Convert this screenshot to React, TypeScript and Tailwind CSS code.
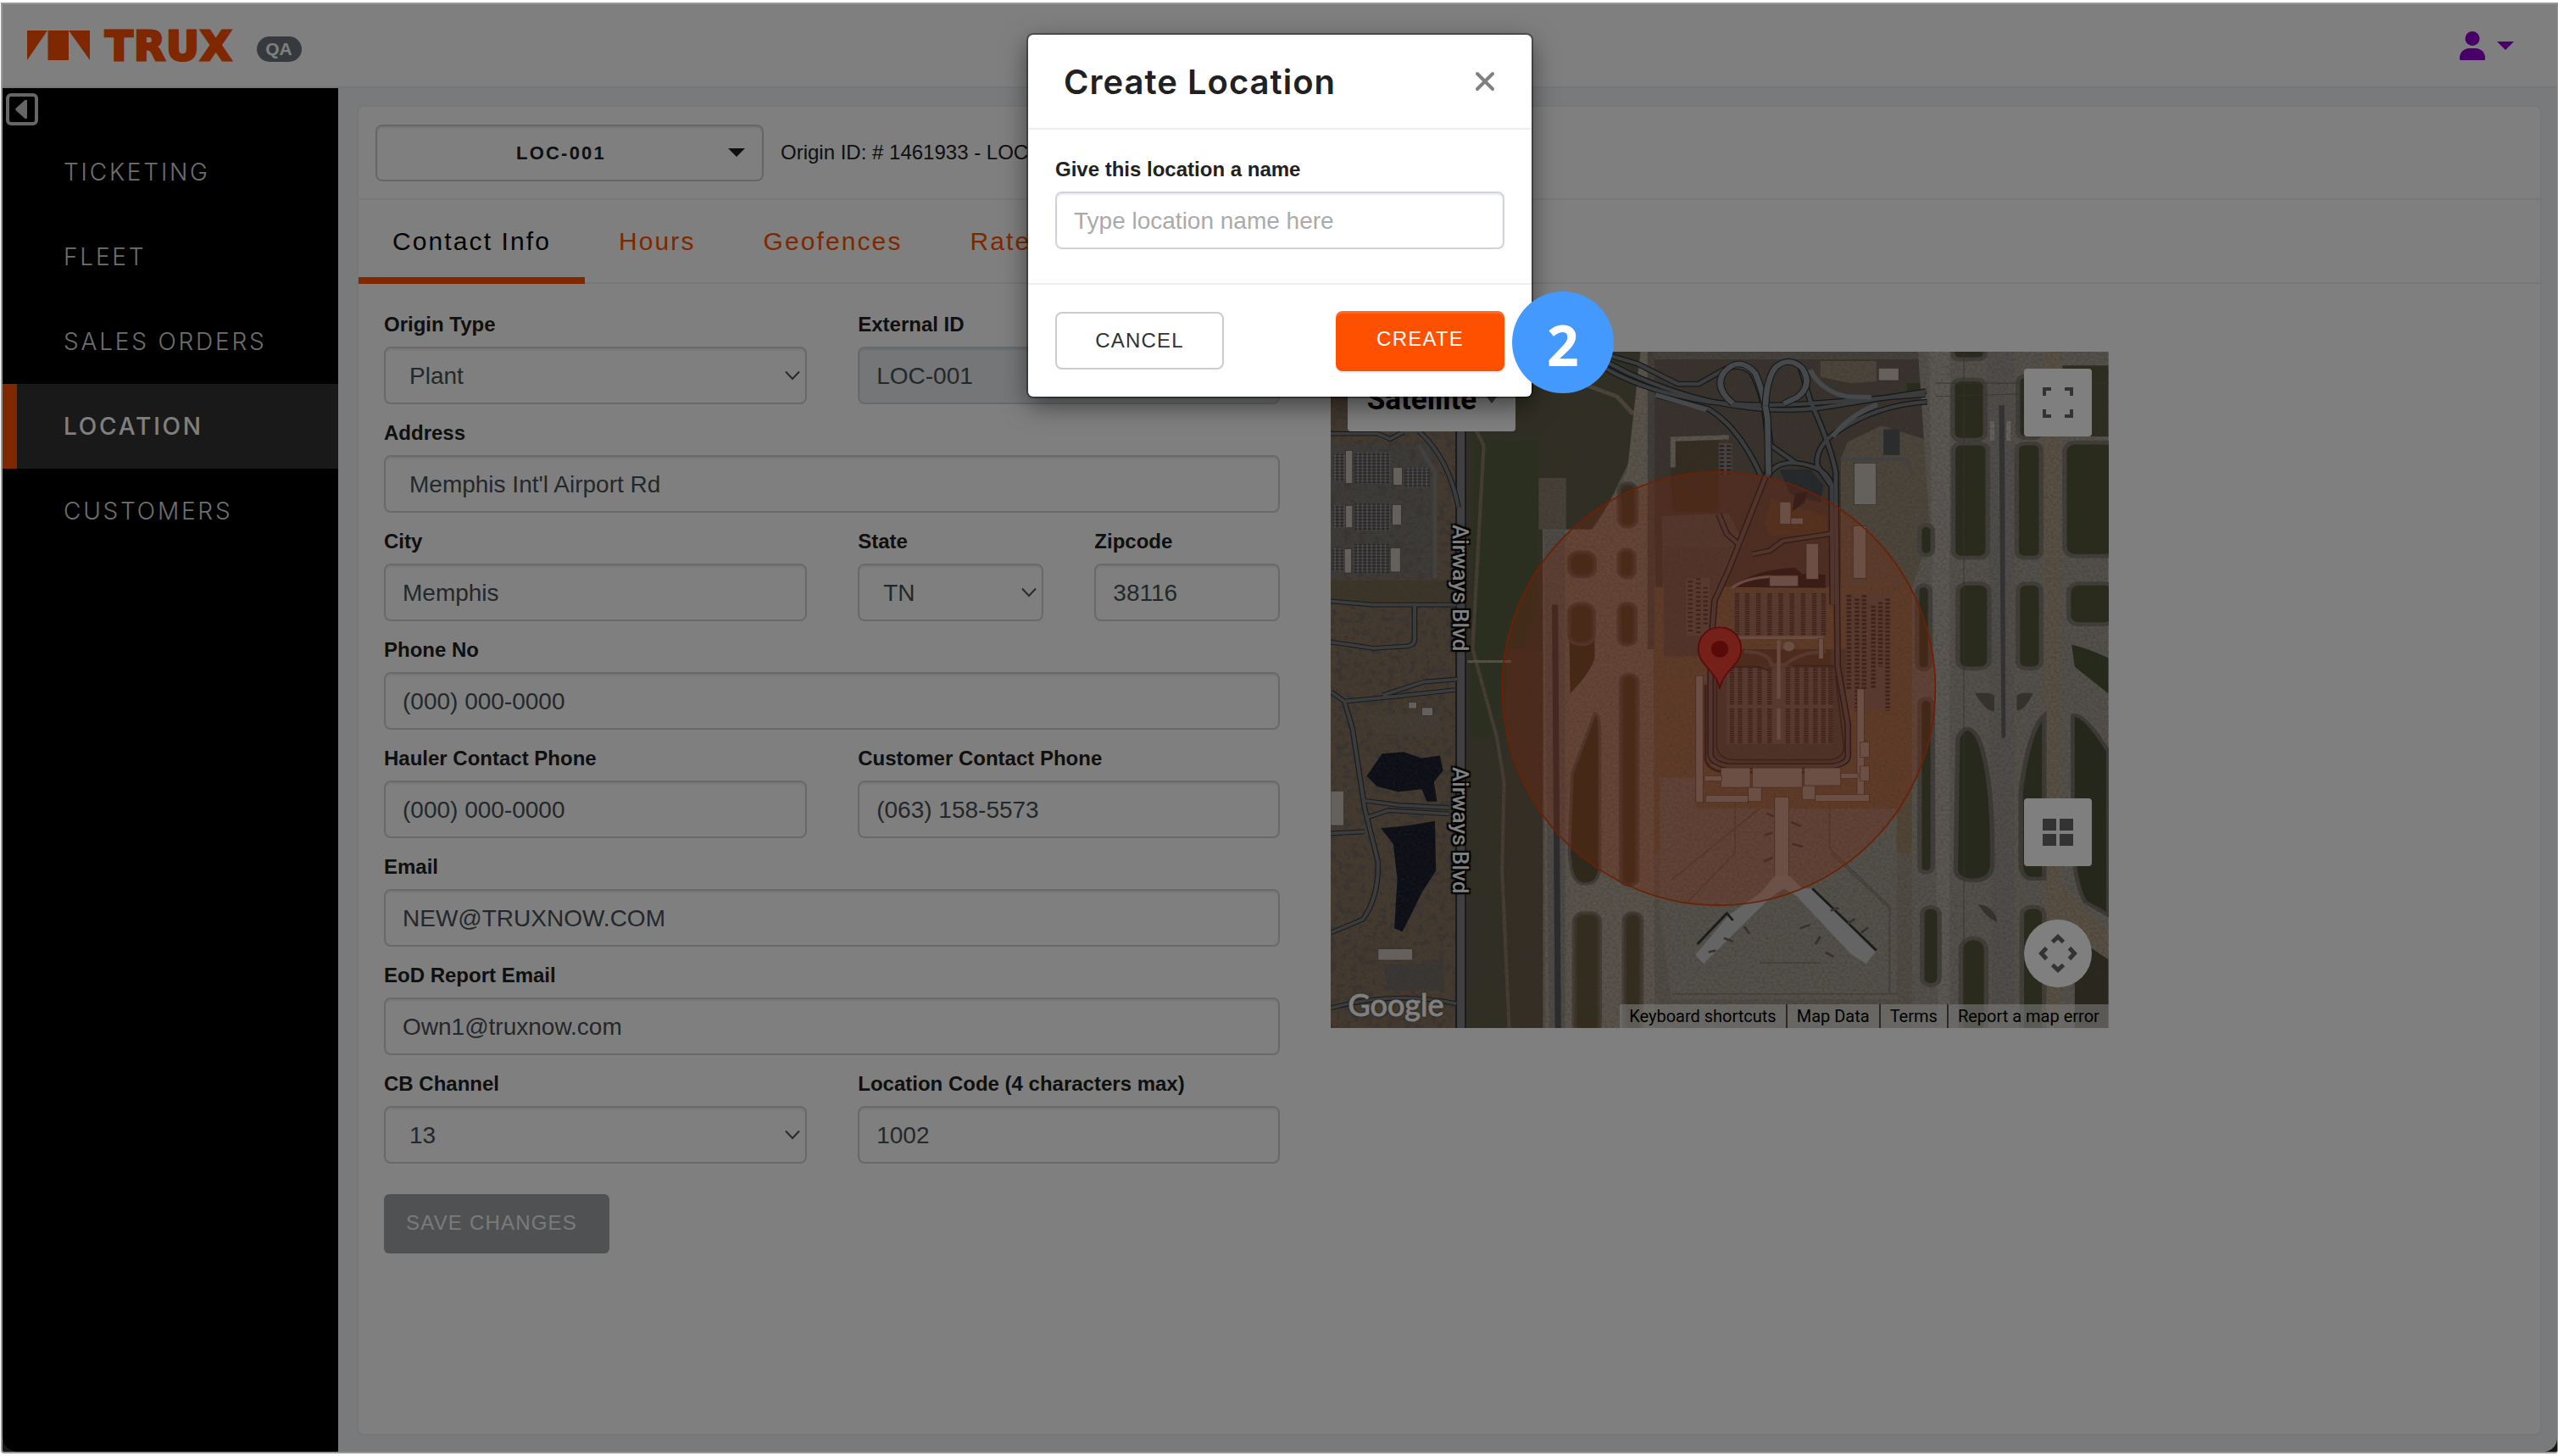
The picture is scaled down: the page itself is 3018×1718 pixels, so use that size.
import { useState, type ReactNode } from 'react';

type Cell = [x: number, y: number, w: number, h: number, r: number];

const NAV_ITEMS = ['Ticketing', 'Fleet', 'Sales Orders', 'Location', 'Customers'];
const TABS = ['Contact Info', 'Hours', 'Geofences', 'Rates'];

const fieldBase =
  'h-[68px] w-full rounded-lg border-2 border-[#ced4da] pt-[2px] text-[28px] text-[#495057] shadow-[inset_0_2px_2px_rgba(0,0,0,0.075)] outline-none';

// grass between the taxiways
const GRASS: Cell[] = [
  [1240, 20, 64, 26, 12], [1240, 92, 64, 136, 16], [1241, 236, 68, 258, 16], [1250, 552, 62, 192, 18],
  [1256, 1352, 50, 220, 26], [1368, 84, 46, 140, 14], [1366, 236, 48, 258, 14], [1368, 552, 46, 192, 16],
  [1376, 1282, 44, 290, 18], [1460, 234, 100, 256, 20], [1468, 552, 90, 92, 20], [1175, 420, 26, 68, 13],
  [1170, 556, 26, 190, 13], [1175, 812, 26, 392, 13], [1180, 1282, 34, 176, 16], [486, 482, 50, 54, 18],
  [486, 598, 48, 90, 20], [584, 326, 34, 98, 17], [584, 476, 30, 62, 14], [584, 598, 32, 92, 14],
  [588, 758, 32, 474, 15], [594, 1296, 34, 270, 16], [496, 1296, 50, 270, 18],
];

const BUILDINGS: Cell[] = [
  [46, 252, 14, 74, 0], [140, 290, 18, 40, 0], [46, 376, 14, 50, 0], [138, 374, 18, 46, 0],
  [44, 474, 14, 54, 0], [134, 472, 20, 54, 0], [110, 1376, 68, 26, 2], [17, 1020, 26, 78, 0],
  [196, 832, 22, 18, 0], [170, 820, 16, 14, 0], [1046, 280, 44, 94, 0], [1044, 422, 26, 118, 0],
  [952, 462, 24, 80, 0], [880, 534, 56, 24, 2], [1094, 66, 40, 28, 0], [900, 368, 22, 50, 3],
  [922, 404, 24, 14, 0], [976, 676, 10, 46, 0], [735, 760, 14, 286, 0], [1052, 790, 14, 250, 0],
  [1058, 910, 18, 34, 0], [1058, 964, 18, 34, 0], [754, 1030, 84, 16, 0], [838, 1012, 26, 32, 0],
  [944, 1008, 26, 32, 0], [970, 1028, 106, 16, 0], [784, 968, 58, 44, 0], [846, 968, 98, 44, 0],
  [948, 968, 72, 40, 0], [752, 986, 34, 12, 0], [1020, 980, 34, 12, 0], [890, 1034, 28, 180, 0],
];

const LOTS: Cell[] = [
  [22, 260, 24, 60, 0], [64, 256, 70, 70, 0], [162, 290, 50, 44, 0], [22, 376, 24, 50, 0],
  [64, 372, 70, 60, 0], [20, 472, 24, 52, 0], [62, 462, 70, 66, 0], [810, 572, 182, 98, 0],
  [796, 742, 208, 172, 0], [1030, 574, 88, 260, 0], [716, 540, 46, 130, 0], [780, 236, 26, 70, 0],
];

const HIGHWAYS = [
  'M500 29 L560 68 Q640 120 760 142 Q860 154 960 146 L1186 126',
  'M520 29 L600 76 Q720 138 820 152 Q900 166 980 156 L1188 118',
  'M540 29 L620 56 L700 102 L740 102 L780 76 Q820 48 846 78 Q870 130 874 200 Q880 250 876 300 L800 520 L772 590 L764 700 L764 940 Q770 960 800 964 L1000 964 Q1034 960 1034 940 L1034 870 L1014 740 L1010 300 Q1000 240 960 140 L940 60',
  'M660 128 L760 158 Q820 200 862 306',
  'M870 120 Q876 200 882 240 L934 282',
  'M876 312 Q890 276 930 280 Q990 286 1002 330 L1004 600',
  'M1190 142 Q1080 150 1000 220 Q970 250 974 286 L1000 330',
  'M1000 440 L906 456 L880 478 L846 486',
  'M780 396 L796 440 L820 464',
];

const CITY_STREETS =
  'M190 208 Q250 270 268 380 M17 214 H110 L134 226 L160 210 M17 592 L100 600 H264 M182 600 V680 Q180 694 160 694 L100 698 L17 684 M17 796 L44 818 L150 806 L262 792 M120 804 L200 774 L266 768 M44 818 L60 880 L84 1060 L110 1180 Q112 1260 80 1310 L17 1340 M84 1042 L150 1052 L250 1058 M88 1080 L130 1064 L250 1072 M17 1116 L84 1112 M17 1510 Q140 1470 264 1500';

const CAR_ROWS = [816, 836, 858, 880, 902, 924, 946, 968, 986];
const LOWER_ROWS = [806, 822, 842, 860, 880, 916, 934, 952, 970, 986, 1000];
const EAST_ROWS = [1036, 1052, 1066, 1084, 1098, 1112];

const toCell = ([x, y, w, h, r]: Cell, i: number) => (
  <rect key={i} x={x} y={y} width={w} height={h} rx={r} />
);

const SatelliteImage = () => (
  <svg viewBox="17 29 1529 1526" preserveAspectRatio="none" className="block h-full w-full" aria-hidden="true">
    <defs>
      <filter id="ground" x="0" y="0" width="100%" height="100%">
        <feTurbulence type="fractalNoise" baseFrequency="0.18" numOctaves="4" seed="7" />
        <feColorMatrix values="0 0 0 0 0.1  0 0 0 0 0.09  0 0 0 0 0.07  2 0 0 0 -0.7" />
      </filter>
      <filter id="trees" x="0" y="0" width="100%" height="100%">
        <feTurbulence type="fractalNoise" baseFrequency="0.07" numOctaves="5" seed="3" />
        <feColorMatrix values="0 0 0 0 0.17  0 0 0 0 0.14  0 0 0 0 0.14  6 0 0 0 -3" />
      </filter>
      <pattern id="cars" width="9" height="7" patternUnits="userSpaceOnUse">
        <rect width="9" height="7" fill="#7f7b78" />
        <rect width="6" height="4" fill="#504f52" />
        <rect x="6" y="4" width="3" height="2" fill="#b6b4b0" />
      </pattern>
    </defs>

    <rect x="17" y="29" width="1529" height="1526" fill="#a09889" />

    {/* west side: neighbourhood, trees and ponds */}
    <rect x="17" y="29" width="250" height="1526" fill="#8c7660" />
    <path d="M17 236 H222 V540 H17Z" fill="#7d7974" />
    <rect x="17" y="29" width="250" height="1526" filter="url(#trees)" opacity="0.75" />
    <path d="M17 545 H258 V596 H17Z" fill="#7a6b54" />
    <path d="M80 850 L230 846 L236 900 L110 890Z" fill="#8b7a68" />
    <path d="M120 1410 H240 V1470 H130Z" fill="#75706b" />
    <path d="M118 936 L160 932 L196 946 L232 940 L238 974 L220 1000 L226 1044 L206 1044 L196 1016 L150 1022 L108 1010 L88 986Z" fill="#191c2e" />
    <path d="M116 1104 L170 1098 L222 1088 L224 1200 L196 1250 L158 1338 L142 1330 L148 1220 L140 1140Z" fill="#191c2e" />

    {/* grass between the boulevard and the first runway */}
    <path d="M284 29 H640 L620 240 L560 380 L530 430 H434 V1555 H284Z" fill="#625f49" />
    <path d="M300 230 H424 V600 L330 900 H290Z" fill="#56603f" />
    <path d="M362 700 H434 V1555 H362Z" fill="#6c5d4a" />
    <path d="M426 314 H480 V430 H426Z" fill="#8e8271" />
    <path d="M300 200 L318 240 L296 700 L344 900 L358 1000 L354 1200 L368 1555" fill="none" stroke="#8d7a68" strokeWidth="7" />
    <path d="M286 728 H372" stroke="#b0a595" strokeWidth="6" />
    <path d="M420 60 L500 96 L580 130 L612 170" fill="none" stroke="#9b8a77" strokeWidth="9" />

    {/* terminal land */}
    <path d="M650 29 H1196 V560 H655Z" fill="#74665a" />
    <path d="M650 29 H1196 V300 H650Z" filter="url(#trees)" opacity="0.45" />
    <path d="M640 29 H1190 V46 H640Z" fill="#8a837a" />
    <path d="M980 50 H1090 V96 L1040 100 L980 86Z" fill="#9a8b77" />
    <path d="M1034 232 L1100 196 L1194 230 V560 H1020 V270Z" fill="#9b8c78" />
    <path d="M1150 100 H1194 V130 H1150Z" fill="#4f5a3a" />
    <path d="M690 226 L780 222 V390 H690 L684 290Z" fill="#6c5a43" />
    <path d="M690 290 V226 L800 222" fill="none" stroke="#b3aa9e" strokeWidth="10" />
    <path d="M668 400 L800 394 L830 460 L780 560 L764 700 L672 716Z" fill="#857d79" />
    <path d="M650 560 H1190 V1160 H650Z" fill="#a58b6d" />
    <path d="M672 470 H806 L764 590 V716 H672Z" fill="#7f7673" />
    <path d="M760 700 H1030 V960 H760Z" fill="#78706b" />
    <path d="M900 296 L960 294 L986 330 L980 370 L920 350Z" fill="#4b5258" />
    <path d="M870 420 L884 360 L990 400 L996 440 L880 444Z" fill="#8a7050" />
    <path d="M800 700 H1000 V738 H800Z" fill="#775f48" />
    <path d="M664 990 H735 V1060 H1130 V1490 H688 L664 1300Z" fill="#a9a195" />
    <path d="M688 1220 L860 1060 M1120 1290 L1000 1160 M690 1478 H1130 M860 1408 H980 M812 1040 V1160 L720 1270 M998 1040 V1150 L1116 1280 V1480" fill="none" stroke="#8c8376" strokeWidth="3" />

    {/* runways */}
    <path d="M626 29 H650 L654 1555 H548 L534 430 L600 300Z" fill="#b2a797" />
    <path d="M640 29 H654 V700 H640Z" fill="#827a73" />
    <path d="M434 430 H560 V1555 H440Z" fill="#b2a797" />
    <path d="M436 432 H478 V1555 H446Z" fill="#9c958e" />
    <path d="M452 600 L464 600 L470 1555 H458Z" fill="#5a565b" />
    <path d="M486 1160 L492 980 L536 846 Q546 840 546 900 V1200 Q540 1232 516 1230 Q492 1230 488 1180Z" fill="#5f5339" stroke="#857b72" strokeWidth="6" />
    <path d="M486 660 H536 V720 Q530 750 488 800Z" fill="#5f5339" />

    <path d="M1172 29 H1546 V1555 H1160 V560 L1196 440Z" fill="#a8a196" />
    <path d="M1194 29 H1234 V1555 H1212Z" fill="#b7b0a6" />
    <path d="M1308 29 H1362 V1555 H1318Z" fill="#a09b95" />
    <path d="M1331 150 H1342 L1344 900 H1336Z" fill="#69666a" />
    <path d="M1314 186 H1322 V230 H1314Z M1346 186 H1354 V230 H1346Z" fill="#cfcbc4" />
    <path d="M1420 29 H1454 V1555 H1424Z" fill="#b39f88" />
    <path d="M1456 60 H1546 V220 H1456Z" fill="#5b5b42" />
    <path d="M1474 690 Q1510 700 1546 720 V800 L1480 740Z" fill="#4c5434" />
    <path d="M1476 850 Q1496 840 1546 930 V1300 L1500 1270 Q1476 1220 1476 1100Z" fill="#4c4f36" stroke="#7d756e" strokeWidth="8" />
    <path d="M1480 1350 L1546 1400 V1555 H1480Z" fill="#54503b" />
    <path d="M1450 1230 L1546 1340 V1400 L1450 1290Z" fill="#b39f88" />
    <path d="M1246 1200 L1250 900 Q1268 860 1290 900 Q1320 980 1318 1190 Q1314 1222 1282 1222 Q1250 1222 1246 1200Z" fill="#4f5239" stroke="#7d756e" strokeWidth="9" />
    <path d="M1374 1190 V1020 Q1390 880 1420 850 V1218 H1390 Q1376 1212 1374 1190Z" fill="#4f5239" stroke="#7d756e" strokeWidth="9" />
    <path d="M1284 800 Q1316 796 1322 806 V840 Q1306 842 1284 800Z M1398 800 Q1370 796 1366 806 V838 Q1380 842 1398 800Z M1290 1276 Q1322 1280 1328 1316 Q1308 1310 1290 1276Z" fill="#6d665f" />

    <g fill="#535639" stroke="#857d76" strokeWidth="9">{GRASS.map(toCell)}</g>
    <g fill="#7a5f42" opacity="0.6">{GRASS.slice(15).map(toCell)}</g>
    <path d="M1262 29 V1555 M1206 100 H1546 M1206 130 L1500 120" stroke="#6d655e" strokeWidth="2" opacity="0.7" />
    <rect x="17" y="29" width="1529" height="1526" filter="url(#ground)" opacity="0.3" />

    {/* parking */}
    <g fill="url(#cars)">{LOTS.slice(0, 7).map(toCell)}</g>
    <g fill="#8d8480">{LOTS.slice(7).map(toCell)}</g>
    <g stroke="#4b4343" strokeWidth="9" strokeDasharray="3 2">
      {CAR_ROWS.map((x) => <path key={x} d={`M${x} 574V670`} />)}
      {LOWER_ROWS.map((x) => <path key={x} d={`M${x} 742V826M${x} 834V914`} />)}
      {EAST_ROWS.map((x) => <path key={x} d={`M${x} ${570 + (x % 5) * 8}V${(x % 3) * 50 + 740}`} strokeDasharray="5 4" />)}
      <path d="M724 546V664M740 540V670M754 560V650" strokeDasharray="4 6" />
      <path d="M786 240V306M800 240V306" strokeDasharray="4 5" />
    </g>
    <path d="M806 560 Q850 520 930 516 L944 530 L990 532 V562Z" fill="#41333a" />
    <path d="M806 562 Q830 540 884 536" fill="none" stroke="#c3b7ae" strokeWidth="6" />
    <path d="M930 350 L956 344 L948 370 L924 390Z" fill="#3b3840" />

    {/* roads */}
    <g fill="none" strokeLinejoin="round">
      <g stroke="#2f3134" strokeWidth="13">{HIGHWAYS.map((d) => <path key={d} d={d} />)}</g>
      <g stroke="#77787a" strokeWidth="8">{HIGHWAYS.map((d) => <path key={d} d={d} />)}</g>
      <path d="M808 146 Q770 110 790 76 Q820 36 852 78 Q868 120 876 180 L878 306" stroke="#2f3134" strokeWidth="15" />
      <path d="M808 146 Q770 110 790 76 Q820 36 852 78 Q868 120 876 180 L878 306" stroke="#8d9299" strokeWidth="11" />
      <path d="M872 150 Q874 90 892 64 Q918 38 944 66 Q966 104 934 132 L908 146" stroke="#2f3134" strokeWidth="15" />
      <path d="M872 150 Q874 90 892 64 Q918 38 944 66 Q966 104 934 132 L908 146" stroke="#8d9299" strokeWidth="11" />
      <path d="M960 70 Q980 116 1030 130 L1080 132 M656 126 L756 160 M1092 148 Q1040 170 1004 220" stroke="#8d9299" strokeWidth="10" />
      <path d="M273 29 V1555" stroke="#35363a" strokeWidth="22" />
      <path d="M273 29 V1555" stroke="#808084" strokeWidth="15" />
      <path d={CITY_STREETS} stroke="#35363a" strokeWidth="11" />
      <path d={CITY_STREETS} stroke="#77787a" strokeWidth="7" />
      <path d="M190 240 L222 300 V540" stroke="#86837f" strokeWidth="8" />
      <path d="M1020 272 H1150 L1162 310" stroke="#86837f" strokeWidth="8" />
      <path d="M776 730 V920 Q780 948 810 950 H996 Q1026 948 1026 920 L1010 760" stroke="#4a4341" strokeWidth="3" />
      <path d="M754 780 V950 Q760 976 796 978 H1010" stroke="#4a4341" strokeWidth="5" />
      <path d="M788 740 H860 L882 750 M926 738 H1006" stroke="#4a4341" strokeWidth="4" />
      <path d="M830 706 Q880 706 884 736 H910 Q940 706 990 706" stroke="#8d8480" strokeWidth="8" />
      <path d="M806 674 H986 M898 680 V812 M898 834 V904" stroke="#c3b7ae" strokeWidth="7" />
    </g>
    <path d="M1104 204 H1136 V262 H1104Z" fill="#57585a" />

    {/* terminal and concourses */}
    <g fill="#c8c2bb" stroke="#4f4540" strokeWidth="1">{BUILDINGS.map(toCell)}</g>
    <circle cx="918" cy="694" r="11" fill="#c8c2bb" />
    <path d="M862 1250 L890 1212 H920 L944 1240 L964 1240 L1088 1384 L1070 1410 L1040 1388 L932 1256 L908 1240 L880 1262 L866 1278 L750 1410 L734 1390 L800 1300Z" fill="#c8c8c8" />
    <path d="M738 1366 L796 1296 L808 1312 M964 1240 L1090 1380" fill="none" stroke="#33363b" strokeWidth="5" />
    <path d="M760 1384 l14 -4 M790 1352 l18 8 M830 1326 l10 16 M940 1330 l20 -8 M970 1366 l10 -18 M990 1384 l16 10 M1000 1290 l16 -6 M1034 1320 l14 -12 M1060 1340 l14 -12 M874 1070 l14 8 M870 1120 l16 -6 M922 1090 l20 10 M924 1140 l22 6 M868 1180 l18 -10" stroke="#6b655f" strokeWidth="5" />

    {/* geofence radius */}
    <ellipse cx="780" cy="789" rx="426" ry="489" fill="#ff4a10" fillOpacity="0.29" stroke="#d8400a" strokeWidth="3" />

    <path d="M782 790 C778 750 740 738 740 700 C740 672 758 651 782 651 C806 651 824 672 824 700 C824 738 786 750 782 790Z" fill="#ea4335" stroke="#b31412" strokeWidth="3" />
    <ellipse cx="782" cy="700" rx="17" ry="19" fill="#b31412" />
  </svg>
);

const StreetLabel = ({ place }: { place: string }) => (
  <span
    className={`absolute left-[136px] text-[26px] leading-[34px] font-medium text-white [text-shadow:0_0_2px_#000,0_0_4px_#000,2px_2px_1px_#000,-2px_-2px_1px_#000,2px_-2px_1px_#000,-2px_2px_1px_#000] [writing-mode:vertical-rl] ${place}`}
  >
    Airways Blvd
  </span>
);

const MapPanel = () => (
  <div className="relative h-[798px] w-full overflow-hidden font-[Roboto,sans-serif]">
    <SatelliteImage />
    <button type="button" className="absolute top-5 left-5 flex h-[74px] w-[198px] items-center justify-center gap-3 rounded-sm bg-white text-[35px] font-bold text-black">
      Satellite
      <svg viewBox="0 0 12 8" className="h-2 w-3 fill-[#666]"><path d="M0 0h12L6 8z" /></svg>
    </button>
    <StreetLabel place="top-[204px]" />
    <StreetLabel place="top-[490px]" />

    <button type="button" aria-label="Toggle fullscreen" className="absolute top-5 right-5 flex size-20 items-center justify-center rounded-sm bg-white">
      <svg viewBox="0 0 18 18" className="size-9 fill-[#666]">
        <path d="M0 0v5h2V2h3V0H0zm16 0h-3v2h3v3h2V0h-2zm0 16h-3v2h5v-5h-2v3zM2 13H0v5h5v-2H2v-3z" />
      </svg>
    </button>
    <button type="button" aria-label="Map tilt" className="absolute right-5 bottom-[191px] flex size-20 items-center justify-center rounded-sm bg-white">
      <svg viewBox="0 0 36 32" className="h-8 w-9 fill-[#666]">
        <path d="M0 0h16v14H0zM20 0h16v14H20zM0 18h16v14H0zM20 18h16v14H20z" />
      </svg>
    </button>
    <button type="button" aria-label="Map camera controls" className="absolute right-5 bottom-12 flex size-20 items-center justify-center rounded-full bg-white">
      <svg viewBox="0 0 46 46" className="size-[46px] fill-none stroke-[#666] stroke-[5]">
        <path d="M16.500 9.500L23 3.500l6.500 6M16.500 36.500l6.500 6 6.500-6M9.500 16.500l-6 6.500 6 6.500M36.500 16.500l6 6.500-6 6.500" />
      </svg>
    </button>

    <span className="absolute bottom-[6px] left-5 font-[Lato,sans-serif] text-[36px] leading-[44px] text-white [-webkit-text-stroke:1px_#fff] [text-shadow:0_0_3px_#444,0_0_3px_#444]">
      Google
    </span>
    <div className="absolute right-0 bottom-0 flex h-7 items-center divide-x-2 divide-[#555] bg-[#f5f5f5]/60 text-[20px] text-black">
      <button type="button" className="px-[11px] leading-7">Keyboard shortcuts</button>
      <button type="button" className="px-[11px] leading-7">Map Data</button>
      <a href="#terms" className="px-[11px] leading-7">Terms</a>
      <a href="#report" className="px-[11px] leading-7">Report a map error</a>
    </div>
  </div>
);

type FieldProps = {
  id: string;
  label: string;
  span: string;
  children: ReactNode;
};

const Field = ({ id, label, span, children }: FieldProps) => (
  <div className={span}>
    <label htmlFor={id} className="mb-2 block text-[24px] leading-9 font-bold text-[#212121]">
      {label}
    </label>
    {children}
  </div>
);

type SelectProps = {
  id: string;
  options: string[];
};

const Select = ({ id, options }: SelectProps) => (
  <div className="relative">
    <select id={id} className={`${fieldBase} appearance-none bg-white pl-7`}>
      {options.map((o) => <option key={o}>{o}</option>)}
    </select>
    <svg viewBox="0 0 18 12" className="pointer-events-none absolute top-7 right-2 h-3 w-[18px] fill-none stroke-[#555] stroke-2">
      <path d="M1 1.500l8 8.500 8-8.500" />
    </svg>
  </div>
);

const Text = ({ id, value, wide, disabled }: { id: string; value: string; wide?: boolean; disabled?: boolean }) => (
  <input
    id={id}
    type="text"
    defaultValue={value}
    disabled={disabled}
    className={`${fieldBase} ${wide ? 'px-7' : 'px-5'} ${disabled ? 'bg-[#e9ecef]' : 'bg-white'}`}
  />
);

const ContactForm = () => (
  <form className="px-[30px] pt-[30px]" onSubmit={(e) => e.preventDefault()}>
    <div className="grid grid-cols-[499fr_219fr_219fr] gap-x-[60px] gap-y-4">
      <Field id="type" label="Origin Type" span="col-span-1"><Select id="type" options={['Plant']} /></Field>
      <Field id="ext" label="External ID" span="col-span-2"><Text id="ext" value="LOC-001" disabled /></Field>
      <Field id="address" label="Address" span="col-span-3"><Text id="address" value="Memphis Int'l Airport Rd" wide /></Field>
      <Field id="city" label="City" span="col-span-1"><Text id="city" value="Memphis" /></Field>
      <Field id="state" label="State" span="col-span-1"><Select id="state" options={['TN']} /></Field>
      <Field id="zip" label="Zipcode" span="col-span-1"><Text id="zip" value="38116" /></Field>
      <Field id="phone" label="Phone No" span="col-span-3"><Text id="phone" value="(000) 000-0000" /></Field>
      <Field id="hauler" label="Hauler Contact Phone" span="col-span-1"><Text id="hauler" value="(000) 000-0000" /></Field>
      <Field id="customer" label="Customer Contact Phone" span="col-span-2"><Text id="customer" value="(063) 158-5573" /></Field>
      <Field id="email" label="Email" span="col-span-3"><Text id="email" value="NEW@TRUXNOW.COM" /></Field>
      <Field id="eod" label="EoD Report Email" span="col-span-3"><Text id="eod" value="Own1@truxnow.com" /></Field>
      <Field id="cb" label="CB Channel" span="col-span-1"><Select id="cb" options={['13']} /></Field>
      <Field id="code" label="Location Code (4 characters max)" span="col-span-2"><Text id="code" value="1002" /></Field>
    </div>
    <button type="submit" className="mt-9 h-[70px] w-[266px] rounded-md bg-[#a1a3a4] pb-[2px] pl-[26px] text-left text-[24px] tracking-wider text-[#f5f5f5]">
      SAVE CHANGES
    </button>
  </form>
);

const CreateLocationModal = () => {
  const [name, setName] = useState<string>('');

  return (
    <div className="absolute inset-0 flex items-start justify-center bg-black/50 pt-9">
      <div role="dialog" aria-labelledby="modal-title" className="relative w-[594px] rounded-md bg-white shadow-[0_0_0_2px_rgba(0,0,0,0.35),0_10px_30px_rgba(0,0,0,0.5)]">
        <div className="flex h-[112px] items-center justify-between border-b-2 border-[#eee] pr-[43px] pl-[42px]">
          <h2 id="modal-title" className="pt-[2px] font-[Inter,sans-serif] text-[40px] font-semibold tracking-wide text-[#212121]">
            Create Location
          </h2>
          <button type="button" aria-label="Close">
            <svg viewBox="0 0 24 24" className="size-6 fill-none stroke-[#808080] stroke-[4]" strokeLinecap="round">
              <path d="M3 3l18 18M21 3L3 21" />
            </svg>
          </button>
        </div>
        <div className="border-b-2 border-[#eee] px-8 pt-[29px] pb-10">
          <label htmlFor="location-name" className="mb-2 block text-[24px] leading-9 font-bold text-[#212121]">
            Give this location a name
          </label>
          <input
            id="location-name"
            type="text"
            value={name}
            placeholder="Type location name here"
            onChange={(e) => setName(e.target.value)}
            className={`${fieldBase} bg-white px-5 placeholder:text-[#aaa]`}
          />
        </div>
        <div className="flex h-[132px] items-center justify-between px-8">
          <button type="button" className="h-[68px] w-[199px] rounded-lg border-2 border-[#ccc] bg-white text-[24px] tracking-wider text-[#333]">
            CANCEL
          </button>
          <button type="button" className="h-[71px] w-[199px] rounded-lg bg-[#ff5000] pb-1 text-[24px] tracking-wider text-white shadow-[inset_0_3px_0_rgba(255,255,255,0.15),0_2px_2px_rgba(0,0,0,0.1)]">
            CREATE
          </button>
        </div>
        <span className="absolute top-[303px] -right-[97px] flex size-[120px] items-center justify-center rounded-full bg-[#4499ff] pt-1 font-['Noto_Sans',sans-serif] text-[66px] font-bold text-white">
          2
        </span>
      </div>
    </div>
  );
};

const TopBar = () => (
  <header className="flex h-[99px] shrink-0 items-center border-b-2 border-[#ededed] bg-white pr-[51px] pl-[29px]">
    <svg viewBox="0 0 74 35" className="h-[35px] w-[74px] fill-[#ff5000]" aria-hidden="true">
      <path d="M0 0h24L0 35zM24.500 0H49v35H24.500zM49 0h25v35z" />
    </svg>
    <span className="ml-[18px] font-['DejaVu_Sans',sans-serif] text-[48px] leading-none font-bold tracking-wide text-[#ff5000] [-webkit-text-stroke:3px_#ff5000]">
      TRUX
    </span>
    <span className="mt-2 ml-[28px] flex h-[30px] w-[53px] items-center justify-center rounded-full bg-[#6c757d] text-[21px] font-bold text-white">
      QA
    </span>
    <button type="button" aria-label="Account" className="ml-auto flex items-center gap-[14px] text-[#9000d0]">
      <svg viewBox="0 0 30 34" className="h-[34px] w-[30px] fill-current">
        <circle cx="15" cy="8.500" r="8.500" />
        <path d="M11 20h8c6 0 11 5 11 11v1.500c0 1-.6 1.500-1.500 1.500h-27C.6 34 0 33.500 0 32.500V31c0-6 5-11 11-11z" />
      </svg>
      <svg viewBox="0 0 20 10" className="h-[10px] w-5 fill-current"><path d="M0 0h20L10 10z" /></svg>
    </button>
  </header>
);

const Sidebar = () => (
  <aside className="w-[396px] shrink-0 bg-black">
    <button type="button" aria-label="Collapse menu" className="mt-[6px] mb-[5px] ml-1 block size-[38px]">
      <svg viewBox="0 0 38 38" className="size-[38px]">
        <rect x="2" y="2" width="34" height="34" rx="4" fill="none" stroke="#ccc" strokeWidth="4" />
        <path d="M22 8.500c1.500-1.200 3-.8 3 1v19c0 1.800-1.500 2.200-3 1l-10-9c-1-1-1-2 0-3z" fill="#ccc" />
      </svg>
    </button>
    <nav className="font-[Inter,sans-serif] text-[28px] leading-[100px] tracking-widest uppercase">
      {NAV_ITEMS.map((item) => (
        <a
          key={item}
          href={`#${item}`}
          className={
            item === 'Location'
              ? 'block border-l-[17px] border-[#ff5000] bg-[#333] pl-[55px] font-medium text-white'
              : 'block pl-[72px] font-light text-[#ddd]'
          }
        >
          {item}
        </a>
      ))}
    </nav>
  </aside>
);

export default function App() {
  return (
    <div className="flex min-h-screen flex-col bg-white pt-[3px] pb-[3px] pl-px font-['Liberation_Sans',Arial,sans-serif]">
      <div className="relative flex flex-1 flex-col overflow-hidden rounded-b-sm border-2 border-r border-[#999] bg-[#203020]">
        <TopBar />
        <div className="flex flex-1 overflow-hidden rounded-b-2xl bg-[#f3f4f8]">
          <Sidebar />
          <main className="flex flex-1 pt-5 pr-[18px] pb-[19px] pl-[22px]">
            <section className="flex-1 rounded-lg border-2 border-[#eeeeef] bg-white">
              <div className="flex h-[110px] items-center gap-5 border-b-2 border-[#eee] px-5">
                <button type="button" className="flex h-[67px] w-[458px] items-center rounded-lg border-2 border-[#ccc] px-5 text-[#212121] shadow-[inset_0_2px_2px_rgba(0,0,0,0.075)]">
                  <span className="flex-1 text-[22px] font-bold tracking-widest">LOC-001</span>
                  <svg viewBox="0 0 20 10" className="h-[10px] w-5 fill-current"><path d="M0 0h20L10 10z" /></svg>
                </button>
                <span className="text-[24px] text-[#212121]">Origin ID: # 1461933 - LOC-001</span>
              </div>
              <nav className="flex h-[99px] shadow-[inset_0_-2px_0_#eee]">
                {TABS.map((tab) => (
                  <a
                    key={tab}
                    href={`#${tab}`}
                    className={`flex items-center border-b-8 px-10 pt-[6px] text-[30px] tracking-[0.07em] ${
                      tab === 'Contact Info' ? 'border-[#ff5000] text-black' : 'border-transparent text-[#ff5000]'
                    }`}
                  >
                    {tab}
                  </a>
                ))}
              </nav>
              <div className="grid grid-cols-[1117fr_977fr_479fr]">
                <ContactForm />
                <div className="px-[30px] pt-20">
                  <MapPanel />
                </div>
              </div>
            </section>
          </main>
        </div>
        <CreateLocationModal />
      </div>
    </div>
  );
}
